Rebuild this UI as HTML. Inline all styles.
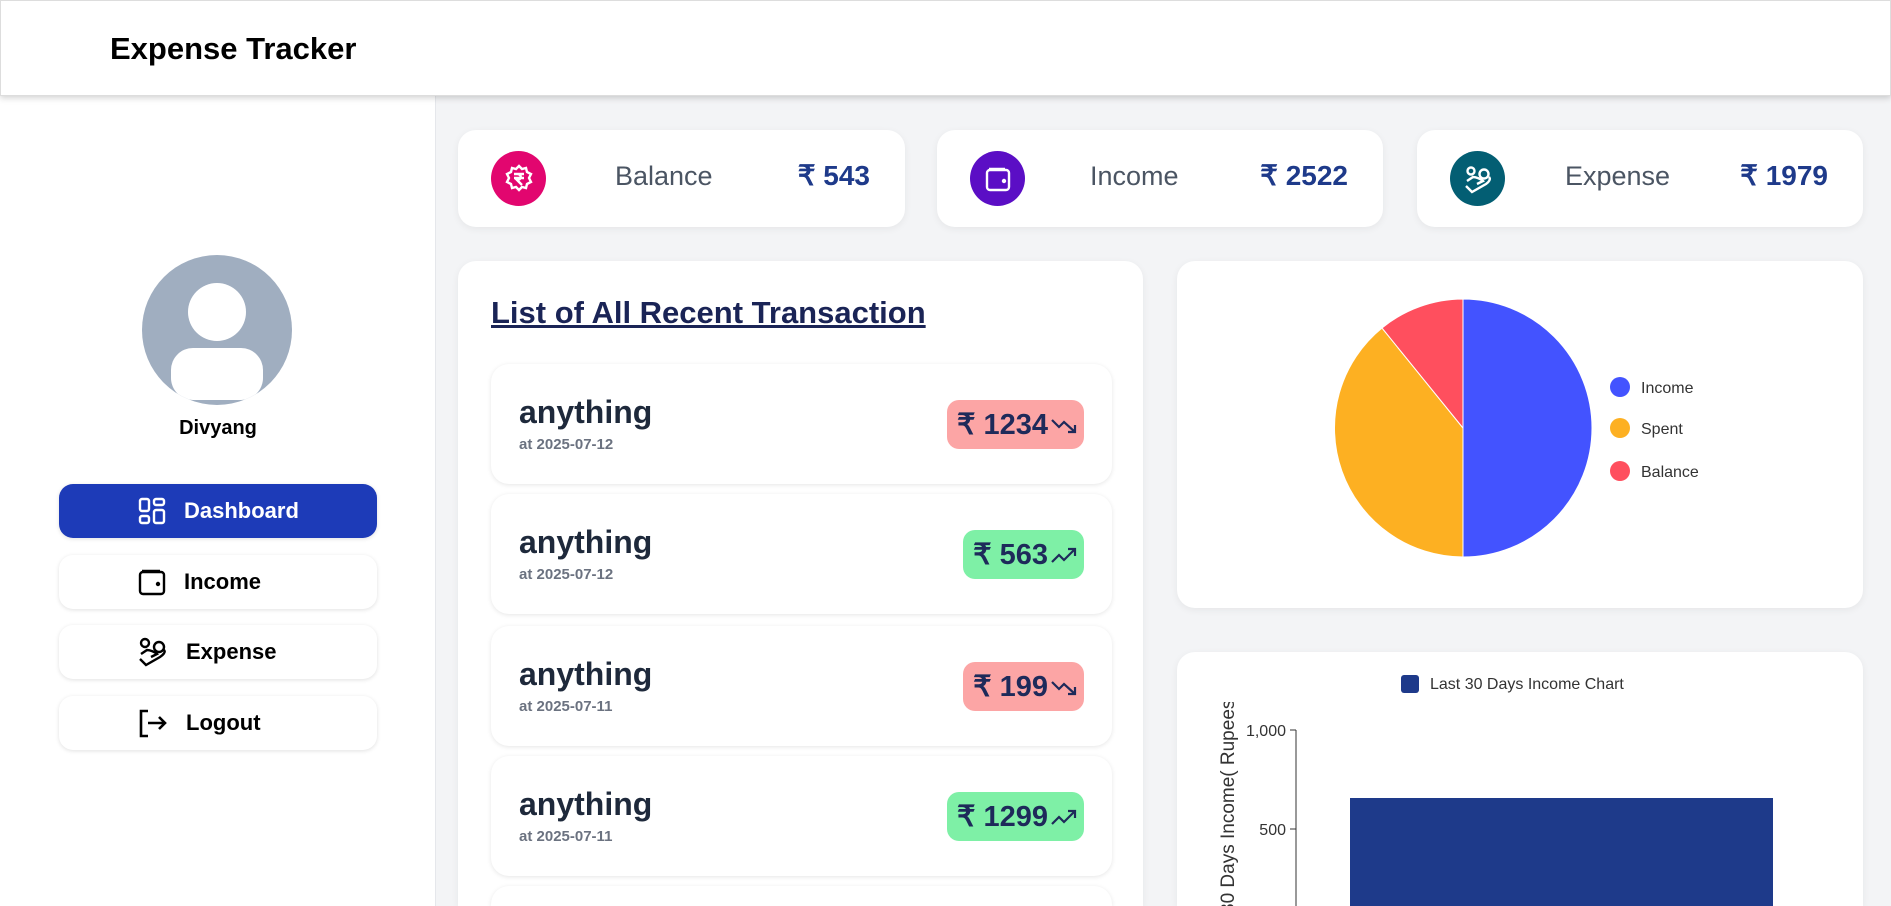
<!DOCTYPE html>
<html><head><meta charset="utf-8"><style>
*{box-sizing:border-box;margin:0;padding:0}
html,body{width:1891px;height:906px;overflow:hidden}
body{background:#f3f4f6;font-family:"Liberation Sans",sans-serif;position:relative}
.hdr{position:absolute;left:0;top:0;width:1891px;height:96px;background:#fff;box-shadow:0 2px 6px rgba(0,0,0,.18);z-index:2;border:1px solid #ddd}
.hdr h1{position:absolute;left:109px;top:30px;font-size:31px;font-weight:bold;color:#000}
.side{position:absolute;left:0;top:96px;width:436px;height:810px;background:#fff;border-right:1px solid #e5e7eb}
.av{position:absolute;left:142px;top:255px;width:150px;height:150px;border-radius:50%;background:#a0aec0;overflow:hidden}
.name{position:absolute;left:0;width:436px;top:417px;text-align:center;font-size:20px;font-weight:bold}
.nav{position:absolute;left:59px;width:318px;height:54px;border-radius:14px;background:#fff;box-shadow:0 1px 4px rgba(0,0,0,.12);font-size:22px;font-weight:bold;display:flex;align-items:center;padding-left:79px}
.nav svg{margin-right:18px}
.card{position:absolute;background:#fff;border-radius:18px;box-shadow:0 2px 8px rgba(0,0,0,.06);overflow:hidden}
.stat .ic{position:absolute;left:33px;top:21px;width:55px;height:55px;border-radius:50%;display:flex;align-items:center;justify-content:center}
.stat .lb{position:absolute;top:31px;font-size:27px;color:#4b5563}
.stat .val{position:absolute;right:35px;top:29px;font-size:28px;font-weight:bold;color:#1e3a8a}
.item{position:absolute;left:33px;width:621px;height:120px;background:#fff;border-radius:18px;box-shadow:0 1px 5px rgba(0,0,0,.1)}
.item .t{position:absolute;left:28px;top:30px;font-size:32px;font-weight:bold;color:#1e293b}
.item .d{position:absolute;left:28px;top:72px;font-size:15px;font-weight:bold;color:#6b7280}
.bd{position:absolute;right:28px;top:36px;height:49px;border-radius:12px;font-size:29px;font-weight:bold;color:#1e2a5a;display:flex;align-items:center;padding:0 6px 0 10px}
.bd svg{margin-left:2px}
.red{background:#fca5a5}.grn{background:#7ef0a6}
</style></head><body>
<div class="hdr"><h1>Expense Tracker</h1></div>
<div class="side"></div>
<div class="av"><div style="position:absolute;left:46px;top:28px;width:58px;height:58px;border-radius:50%;background:#fff"></div><div style="position:absolute;left:29px;top:93px;width:92px;height:52px;border-radius:22px;background:#fff"></div></div>
<div class="name">Divyang</div>
<div class="nav" style="top:484px;background:#1d3bb8;color:#fff"><svg width="28" height="28" viewBox="0 0 28 28" fill="none" stroke="#fff" stroke-width="2.4"><rect x="2" y="2" width="9" height="12" rx="2"/><rect x="16" y="2" width="10" height="6" rx="2"/><rect x="2" y="19" width="9" height="7" rx="2"/><rect x="16" y="13" width="10" height="13" rx="2"/></svg>Dashboard</div>
<div class="nav" style="top:555px"><svg width="28" height="28" viewBox="0 0 28 28" fill="none" stroke="#000" stroke-width="2.4"><rect x="2" y="4" width="24" height="22" rx="3"/><path d="M4 3h18"/><circle cx="20" cy="16" r="1" fill="#000"/></svg>Income</div>
<div class="nav" style="top:625px"><svg width="30" height="30" viewBox="0 0 30 30" fill="none" stroke="#000" stroke-width="2.4"><circle cx="7" cy="6" r="4"/><circle cx="21" cy="10" r="5"/><path d="M3 17l6-4c3 0 8 2 10 4l-6 3M2 22l6 6 14-8c3-2 6-5 4-7"/></svg>Expense</div>
<div class="nav" style="top:696px"><svg width="30" height="30" viewBox="0 0 30 30" fill="none" stroke="#000" stroke-width="2.6"><path d="M10 3H3v25h7M10 15h17M21 9l6 6-6 6"/></svg>Logout</div>

<div class="card stat" style="left:458px;top:130px;width:447px;height:97px"><div class="ic" style="background:#e2066f"><svg width="30" height="30" viewBox="0 0 30 30" fill="none" stroke="#fff" stroke-width="2.4"><path d="M15 2l3 3 4-1 1 4 4 2-2 4 2 4-4 2-1 4-4-1-3 3-3-3-4 1-1-4-4-2 2-4-2-4 4-2 1-4 4 1z"/><path d="M10 10h10M10 14h10M13 10c5 0 5 6 0 6l5 5"/></svg></div><div class="lb" style="left:157px">Balance</div><div class="val">₹ 543</div></div>
<div class="card stat" style="left:937px;top:130px;width:446px;height:97px"><div class="ic" style="background:#5b0ec5"><svg width="28" height="28" viewBox="0 0 28 28" fill="none" stroke="#fff" stroke-width="2.4"><rect x="3" y="5" width="22" height="20" rx="3"/><path d="M5 4h16"/><circle cx="20" cy="16" r="1" fill="#fff"/></svg></div><div class="lb" style="left:153px">Income</div><div class="val">₹ 2522</div></div>
<div class="card stat" style="left:1417px;top:130px;width:446px;height:97px"><div class="ic" style="background:#035e73"><svg width="30" height="30" viewBox="0 0 30 30" fill="none" stroke="#fff" stroke-width="2.4"><circle cx="8" cy="7" r="3.5"/><circle cx="21" cy="10" r="4.5"/><path d="M4 17l6-4c3 0 8 2 10 4l-6 3M3 22l6 6 14-8c3-2 5-5 3-7"/></svg></div><div class="lb" style="left:148px">Expense</div><div class="val">₹ 1979</div></div>

<div class="card" style="left:458px;top:261px;width:685px;height:645px;border-bottom-left-radius:0;border-bottom-right-radius:0">
<div style="position:absolute;left:33px;top:34px;font-size:31px;font-weight:bold;color:#1a2456;text-decoration:underline;text-decoration-thickness:3px">List of All Recent Transaction</div>
<div class="item" style="top:103px"><div class="t">anything</div><div class="d">at 2025-07-12</div><div class="bd red">₹ 1234<svg width="28" height="20" viewBox="0 0 28 20" fill="none" stroke="#1e2a5a" stroke-width="2.2"><path d="M2 5l7 7 5-5 11 10M18 17h7v-7"/></svg></div></div>
<div class="item" style="top:233px"><div class="t">anything</div><div class="d">at 2025-07-12</div><div class="bd grn">₹ 563<svg width="28" height="20" viewBox="0 0 28 20" fill="none" stroke="#1e2a5a" stroke-width="2.2"><path d="M2 17l7-7 5 5 11-11M18 4h7v7"/></svg></div></div>
<div class="item" style="top:365px"><div class="t">anything</div><div class="d">at 2025-07-11</div><div class="bd red">₹ 199<svg width="28" height="20" viewBox="0 0 28 20" fill="none" stroke="#1e2a5a" stroke-width="2.2"><path d="M2 5l7 7 5-5 11 10M18 17h7v-7"/></svg></div></div>
<div class="item" style="top:495px"><div class="t">anything</div><div class="d">at 2025-07-11</div><div class="bd grn">₹ 1299<svg width="28" height="20" viewBox="0 0 28 20" fill="none" stroke="#1e2a5a" stroke-width="2.2"><path d="M2 17l7-7 5 5 11-11M18 4h7v7"/></svg></div></div>
<div class="item" style="top:625px;height:20px;border-bottom-left-radius:0;border-bottom-right-radius:0"></div>
</div>

<div class="card" style="left:1177px;top:261px;width:686px;height:347px">
<svg width="686" height="347" style="position:absolute;left:0;top:0">
<g transform="translate(286,167)">
<path d="M0 0L0 -129A129 129 0 0 1 0 129Z" fill="#4353ff" stroke="#fff" stroke-width="1"/>
<path d="M0 0L0 129A129 129 0 0 1 -81 -100Z" fill="#fdb022" stroke="#fff" stroke-width="1"/>
<path d="M0 0L-81 -100A129 129 0 0 1 0 -129Z" fill="#ff4f5e" stroke="#fff" stroke-width="1"/>
</g>
<circle cx="443" cy="126" r="10" fill="#4353ff"/><circle cx="443" cy="167" r="10" fill="#fdb022"/><circle cx="443" cy="210" r="10" fill="#ff4f5e"/>
<g font-family="Liberation Sans" font-size="16" fill="#333"><text x="464" y="132">Income</text><text x="464" y="173">Spent</text><text x="464" y="216">Balance</text></g>
</svg></div>

<div class="card" style="left:1177px;top:652px;width:686px;height:254px;border-bottom-left-radius:0;border-bottom-right-radius:0">
<svg width="686" height="254" style="position:absolute;left:0;top:0">
<rect x="224" y="23" width="18" height="18" rx="3" fill="#1e3a8a"/>
<text x="253" y="37" font-family="Liberation Sans" font-size="16" fill="#333">Last 30 Days Income Chart</text>
<line x1="119" y1="78" x2="119" y2="254" stroke="#333"/>
<line x1="113" y1="78" x2="119" y2="78" stroke="#333"/><line x1="113" y1="177" x2="119" y2="177" stroke="#333"/>
<text x="109" y="84" text-anchor="end" font-family="Liberation Sans" font-size="16" fill="#333">1,000</text>
<text x="109" y="183" text-anchor="end" font-family="Liberation Sans" font-size="16" fill="#333">500</text>
<rect x="173" y="146" width="423" height="108" fill="#1e3a8a"/>
<text transform="translate(57,262) rotate(-90)" font-family="Liberation Sans" font-size="19" fill="#333">30 Days Income( Rupees)</text>
<rect x="30" y="0" width="40" height="50" fill="#fff"/>
</svg></div>
</body></html>
